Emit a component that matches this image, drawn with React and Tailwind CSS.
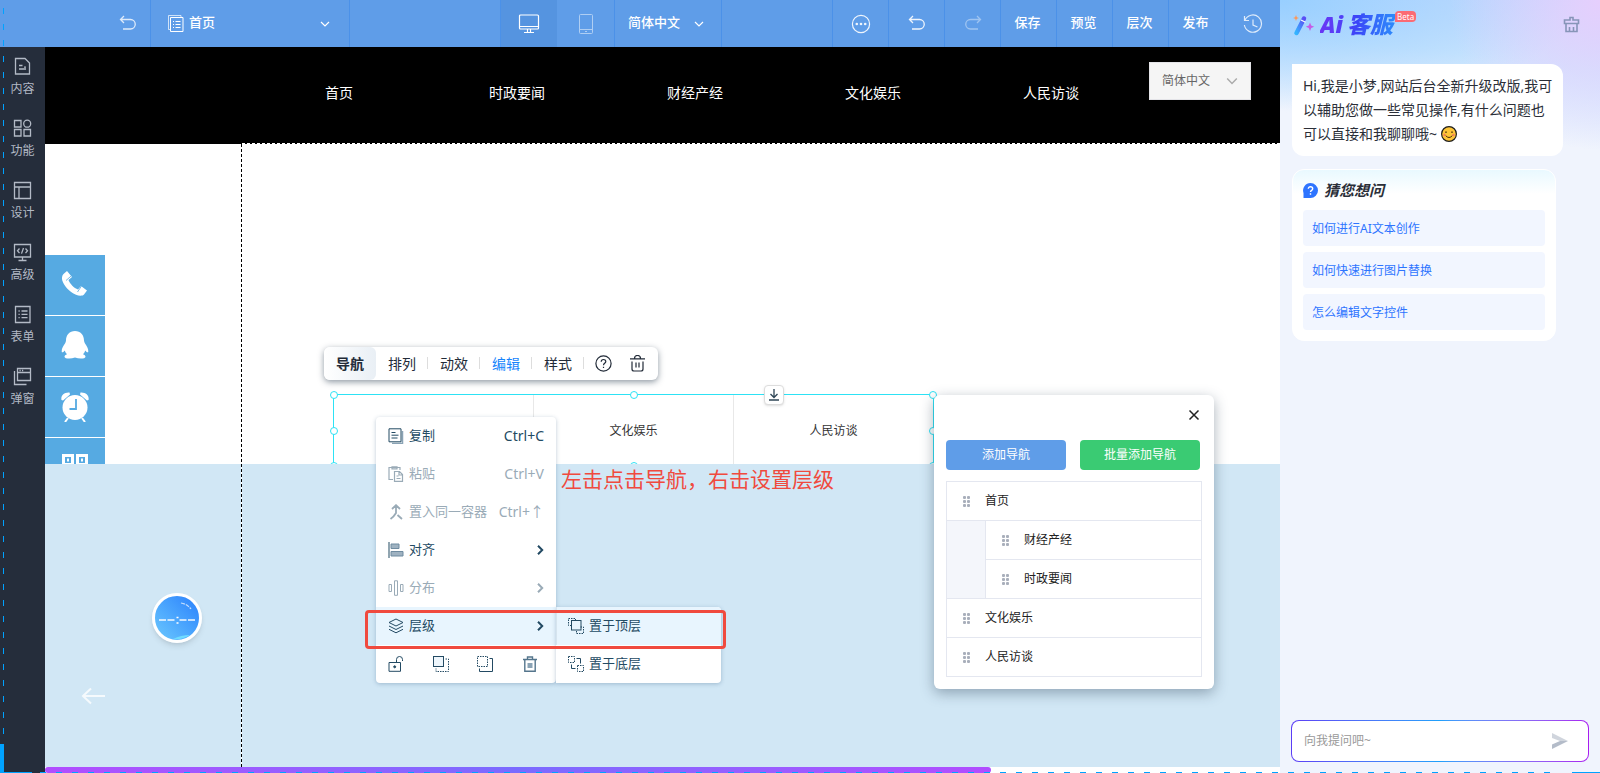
import React, { useState } from "react";

const navItems = ["首页", "时政要闻", "财经产经", "文化娱乐", "人民访谈"];

const Svg = ({ size = 16, box = 16, className = "", children, w = 1 }) => (
  <svg width={size} height={size} viewBox={`0 0 ${box} ${box}`} fill="none" stroke="currentColor" strokeWidth={w} className={`shrink-0 ${className}`} aria-hidden="true">
    {children}
  </svg>
);

const Chevron = ({ size = 10, className = "" }) => (
  <Svg size={size} box={10} w={1.2} className={className}>
    <path d="M1 3l4 4 4-4" />
  </Svg>
);

const UndoIcon = ({ className = "" }) => (
  <Svg size={18} box={18} w={1.3} className={className}>
    <path d="M5 1L1.500 4.500 5 8M1.500 4.500h10a4.600 4.600 0 010 9.500H4" />
  </Svg>
);

const sideItems = [
  {
    label: "内容",
    icon: <path d="M2.500 1.500h9.500l4.500 4.500v11h-14zM6 8.500h3.500M6 12h7M11 10.200h2" />,
  },
  {
    label: "功能",
    icon: (
      <>
        <path d="M1.500 1.500h6.500v6.500h-6.500zM1.500 10.500h6.500v6.500h-6.500zM11 10.500h6.500v6.500h-6.500z" />
        <circle cx="14.200" cy="4.700" r="3.500" />
      </>
    ),
  },
  { label: "设计", icon: <path d="M1.500 1.500h16v16h-16zM1.500 6h16M6 6v11.500" /> },
  { label: "高级", icon: <path d="M1.500 1.500h16v12.500h-16zM9.500 14v3.500M5.500 17.500h8M6.500 5.500L4.500 7.800l2 2.300M12.500 5.500l2 2.300-2 2.300M10.500 5l-2 5.600" /> },
  { label: "表单", icon: <path d="M2.500 1.500h14.500v16h-14.500zM5.500 6h1.200M5.500 9.300h1.200M5.500 12.600h1.200M8.500 6h6M8.500 9.300h6M8.500 12.600h6" /> },
  { label: "弹窗", icon: <path d="M4.500 1.500h13v12h-13zM4.500 5.500h13M6.500 3.500h1.200M9 3.500h1.200M1.500 4v13.500h12" /> },
];

const cell = "flex w-14 shrink-0 items-center justify-center border-l border-[#4b91e8]";

function TopBar() {
  return (
    <header className="flex h-[47px] shrink-0 bg-[#5f9de8] text-[13px] font-medium text-white">
      <button type="button" aria-label="返回" className="flex w-[150px] shrink-0 items-center justify-end pr-[13px]">
        <UndoIcon className="opacity-80" />
      </button>
      <div className="relative flex w-[200px] shrink-0 items-center border-x border-[#4b91e8]">
        <Svg size={18} box={18} className="pointer-events-none absolute left-4">
          <path d="M3 14.500H1.500V.5h12.500v2" opacity=".7" />
          <path d="M3.500 2.500h12.500v14h-12.500zM6 6.500h1M6 9.500h1M6 12.500h1M8.500 6.500h5M8.500 9.500h5M8.500 12.500h5" />
        </Svg>
        <select aria-label="页面" className="h-full w-full appearance-none bg-transparent pb-0.5 pl-[38px] outline-none">
          <option>首页</option>
        </select>
        <Chevron className="pointer-events-none absolute right-[19px]" />
      </div>
      <div className="w-[150px] shrink-0" />
      <button type="button" aria-label="电脑" className="flex w-[57px] shrink-0 items-center justify-center border-l border-[#4b91e8] bg-[#5594e0]">
        <Svg size={22} box={22} w={1.2}>
          <rect x="1.500" y="2" width="19" height="14" rx="1" />
          <path d="M1.500 13.500h19M9.500 16v3M12.500 16v3M6 19.500h10" />
        </Svg>
      </button>
      <button type="button" aria-label="手机" className="flex w-[57px] shrink-0 items-center justify-center">
        <Svg size={22} box={22} className="opacity-50">
          <rect x="4.500" y="1.500" width="13" height="19" rx="1" />
          <path d="M4.500 16.500h13M10 18.500h2" />
        </Svg>
      </button>
      <div className="relative flex w-[108px] shrink-0 items-center border-x border-[#4b91e8]">
        <select aria-label="语言" className="h-full w-full appearance-none bg-transparent pb-0.5 pl-[13px] outline-none">
          <option>简体中文</option>
        </select>
        <Chevron className="pointer-events-none absolute right-[17px]" />
      </div>
      <div className="flex-1" />
      <button type="button" aria-label="更多" className={cell}>
        <Svg size={20} box={20} w={1.2} className="opacity-90">
          <circle cx="10" cy="10" r="8.600" />
          <g fill="currentColor" stroke="none">
            <circle cx="5.800" cy="10" r="1.300" />
            <circle cx="10" cy="10" r="1.300" />
            <circle cx="14.200" cy="10" r="1.300" />
          </g>
        </Svg>
      </button>
      <button type="button" aria-label="撤销" className={cell}>
        <UndoIcon className="opacity-90" />
      </button>
      <button type="button" aria-label="重做" className={cell}>
        <UndoIcon className="-scale-x-100 opacity-40" />
      </button>
      {["保存", "预览", "层次", "发布"].map((label) => (
        <button key={label} type="button" className={`${cell} pr-0.5 pb-0.5`}>
          {label}
        </button>
      ))}
      <button type="button" aria-label="历史" className={cell}>
        <Svg size={20} box={20} w={1.2} className="opacity-80">
          <path d="M1.500 2v4.500h4.500M1.900 6.400A8.600 8.600 0 111.400 11M10 5.500v5.500l4.500 2" />
        </Svg>
      </button>
    </header>
  );
}

function SideBar() {
  return (
    <aside className="flex w-[45px] shrink-0 flex-col gap-4 bg-[#252d3b] pt-2.5 text-xs text-[#b3bac6]">
      {sideItems.map((item) => (
        <button key={item.label} type="button" className="flex h-[46px] flex-col items-center gap-[3px]">
          <Svg size={19} box={19} w={1.3}>
            {item.icon}
          </Svg>
          <span className="leading-5">{item.label}</span>
        </button>
      ))}
    </aside>
  );
}

function SiteHeader() {
  return (
    <div className="flex h-[97px] shrink-0 items-start bg-black bg-[repeating-linear-gradient(90deg,#fff_0_3px,#000_3px_5px)] bg-[length:calc(100%-197px)_1px] bg-right-bottom bg-no-repeat">
      <nav className="grid h-full flex-1 grid-cols-5 items-center pb-1.5 pl-[205px] text-center text-sm text-white">
        {navItems.map((item) => (
          <a key={item} href="#">
            {item}
          </a>
        ))}
      </nav>
      <div className="relative mt-[15px] mr-[29px] ml-[9px] flex h-[38px] w-[102px] items-center border border-[#e4e4e8] bg-[#f5f5f5] text-[#666]">
        <select aria-label="网站语言" className="h-full w-full appearance-none bg-transparent pl-3 text-xs outline-none">
          <option>简体中文</option>
        </select>
        <Chevron size={12} className="pointer-events-none absolute right-3 text-[#aaa]" />
      </div>
    </div>
  );
}

const socials = [
  {
    name: "电话",
    icon: (
      <>
        <path d="M2.500 4L6 1l5 6-3.500 3c1.500 4 5.500 8 9.500 9.500l3-3.500 6 4.500-3 4c-1 1.500-5 1.500-8 .3C8 21.500 3 16 1.300 10.500.6 8 1 5.500 2.500 4z" />
        <path d="M5 10.500l5.500-4.800M16.500 22l4-6" stroke="#56aae2" strokeWidth=".8" />
      </>
    ),
  },
  {
    name: "QQ",
    icon: <path d="M14 0C8.500 0 5 4 5 9.500c0 1-.5 2-1 3-1.500 2-3.500 5-3.300 8 .1 1.500 1.500 1 3-1 .4 1.500 1.200 2.800 2.300 3.800-1.500.5-2.500 1.300-2.500 2.400 0 2 6 2.600 10.500.8 4.500 1.800 10.500 1.200 10.500-.8 0-1.100-1-1.900-2.500-2.400 1.100-1 1.900-2.300 2.300-3.800 1.500 2 2.900 2.500 3 1 .2-3-1.800-6-3.300-8-.5-1-1-2-1-3C23 4 19.500 0 14 0z" />,
  },
  {
    name: "时间",
    icon: (
      <>
        <circle cx="14" cy="15.500" r="12.500" />
        <path d="M.5 8C-.5 4 3 0 8.500.5L9 2.500 2 8.500zM27.500 8C28.500 4 25 0 19.500.5L19 2.500l7 6z" />
        <path d="M7 26l-3 4M21 26l3 4" stroke="#fff" strokeWidth="2" />
        <path d="M15 7v10H8.500" stroke="#56aae2" strokeWidth="1.800" fill="none" />
      </>
    ),
  },
  {
    name: "二维码",
    icon: (
      <g fill="none" stroke="#fff" strokeWidth="3">
        <path d="M2.500 2.500h9v9h-9zM16.500 2.500h9v9h-9zM2.500 17.500h9v9h-9zM17 15v6h9v7" />
        <path d="M6 7h2M20 7h2" />
      </g>
    ),
  },
];

function Selection() {
  const dot = "absolute size-2 -translate-1/2 rounded-full border border-[#2de2f5] bg-white";
  return (
    <div className="absolute top-[250px] left-72 grid h-[73px] w-[601px] grid-cols-[199px_200px_200px] border border-[#2de2f5] text-xs text-[#333]">
      <a href="#" className="flex items-center justify-center" aria-label="首页"></a>
      <a href="#" className="flex items-center justify-center border-l border-[#e8e8e8]">
        文化娱乐
      </a>
      <a href="#" className="flex items-center justify-center border-l border-[#e8e8e8]">
        人民访谈
      </a>
      <i className={`${dot} top-0 left-0`} />
      <i className={`${dot} top-0 left-1/2`} />
      <i className={`${dot} top-0 left-full`} />
      <i className={`${dot} top-1/2 left-0`} />
      <i className={`${dot} top-1/2 left-full`} />
      <i className={`${dot} top-full left-0`} />
      <i className={`${dot} top-full left-1/2`} />
      <i className={`${dot} top-full left-full`} />
      <button type="button" aria-label="下移" className="absolute -top-2.5 left-[430px] flex size-5 items-center justify-center rounded-sm border border-[#ddd] bg-white text-[#2f4656] shadow-sm">
        <Svg size={12} box={12} w={1.3}>
          <path d="M6 0v8.500M2.500 5L6 8.500 9.500 5M1 11h10" />
        </Svg>
      </button>
    </div>
  );
}

function Toolbar() {
  const item = "relative flex w-[52px] items-center justify-center";
  const bar = <i className="absolute top-2.5 right-0 h-3 w-px bg-[#ddd]" />;
  return (
    <div className="absolute top-[300px] left-[279px] flex h-[33px] w-[334px] rounded-md bg-white text-sm text-[#222b38] shadow-[0_2px_6px_rgba(30,50,70,0.5)]">
      <button type="button" className="flex w-[52px] items-center justify-center rounded-md bg-linear-to-r from-white to-[#e9eff5] font-bold">
        导航
      </button>
      <button type="button" className={item}>排列{bar}</button>
      <button type="button" className={item}>动效{bar}</button>
      <button type="button" className={`${item} text-[#1684fc]`}>编辑{bar}</button>
      <button type="button" className={item}>样式{bar}</button>
      <button type="button" aria-label="帮助" className="ml-0.5 flex w-[34px] items-center justify-center">
        <Svg size={17} box={17} w={1.2}>
          <circle cx="8.500" cy="8.500" r="7.600" />
          <path d="M6.200 6.800c0-3 4.600-3 4.600-.2 0 1.800-2.300 1.700-2.300 3.600M8.500 11.700v1.300" />
        </Svg>
      </button>
      <button type="button" aria-label="删除" className="flex w-[34px] items-center justify-center">
        <Svg size={17} box={17} w={1.2}>
          <path d="M1 3.800h15M5.500 3.500a3 3 0 016 0M3 6.500v7.500q0 2 2 2h7q2 0 2-2V6.500M7 7.500v5M10 7.500v5" />
        </Svg>
      </button>
    </div>
  );
}

const menuItems = [
  {
    label: "复制",
    key: "Ctrl+C",
    icon: (
      <>
        <path d="M4 15.500h10.500V3" stroke="#8aa3b5" strokeWidth="1.500" />
        <path d="M1 .8h12v13H1zM3.500 4.500h4M3.500 7.200h7M3.500 10h6" />
      </>
    ),
  },
  { label: "粘贴", key: "Ctrl+V", disabled: true, icon: <path d="M5 13.500H1v-12h11v2.500M4 .8h5v2H4zM6.500 5.500h5l3 3v6.800h-8zM11 5.500v3.500h3.500M8.500 10h2M8.500 12.500h4" strokeWidth="1.200" /> },
  { label: "置入同一容器", key: "Ctrl+↑", disabled: true, icon: <path d="M8 1.500v7.500q-2 3.500-5.500 6M9.500 11l4.500 4M4 5l4-3.800L12 5" strokeWidth="1.800" /> },
  {
    label: "对齐",
    sub: true,
    icon: (
      <>
        <path d="M1 0v16" />
        <path d="M3 2h8v4.500H3zM3 9.500h12V14H3z" fill="#9fb2c1" stroke="#6f8ba0" />
      </>
    ),
  },
  { label: "分布", sub: true, disabled: true, icon: <path d="M1 4.500h2.500v7H1zM6.500.8h3v14.500h-3zM12.500 4.500H15v7h-2.500z" /> },
  { label: "层级", sub: true, active: true, icon: <path d="M8 1l7 3.500L8 8 1 4.500zM1 8l7 3.500L15 8M1 11.300l7 3.500 7-3.500" /> },
];

function ContextMenu() {
  return (
    <div className="absolute top-[370px] left-[331px] flex items-end text-[13px] text-[#234a63]">
      <div className="w-[180px] overflow-hidden rounded-sm bg-white shadow-[0_1px_4px_rgba(40,80,120,0.3)]">
        {menuItems.map((item) => (
          <button
            key={item.label}
            type="button"
            className={`flex h-[38px] w-full items-center pr-3 pl-3 ${item.disabled ? "text-[#9aabb7]" : ""} ${item.active ? "bg-[#e8f5fe]" : ""}`}
          >
            <Svg>{item.icon}</Svg>
            <span className="ml-[5px]">{item.label}</span>
            <span className="ml-auto text-sm">{item.key}</span>
            {item.sub && (
              <Svg size={10} box={10} w={2} className="-mr-px">
                <path d="M3 .8L7.200 5 3 9.200" />
              </Svg>
            )}
          </button>
        ))}
        <div className="flex h-[38px] items-center justify-between pr-[18px] pl-3">
          <button type="button" aria-label="锁定">
            <Svg>
              <path d="M1 6.500h11.500v8.800H1zM8.500 6V3.500a3 3 0 016 0V5" />
              <circle cx="6.700" cy="10.800" r="1" fill="currentColor" />
            </Svg>
          </button>
          <button type="button" aria-label="上移一层">
            <Svg>
              <rect x=".5" y=".5" width="10" height="10" fill="#eef6fc" />
              <path d="M12.500 3h3v12.500H3v-3" strokeDasharray="1.500 1" />
            </Svg>
          </button>
          <button type="button" aria-label="下移一层">
            <Svg>
              <path d="M.5.5h10v10H.5z" strokeDasharray="1.500 1" />
              <path d="M12.500 2.500h3v13H2.500v-3" />
            </Svg>
          </button>
          <button type="button" aria-label="删除图层">
            <Svg>
              <path d="M1 3.500h14M5.500 3V1h5v2M2.800 4v11.200h10.400V4" stroke="#54758c" strokeWidth="1.400" />
              <path d="M5.500 7h5v5h-5z" fill="#8aa3b5" stroke="none" />
            </Svg>
          </button>
        </div>
      </div>
      <div className="w-[165px] overflow-hidden rounded-r-sm bg-white shadow-[0_1px_4px_rgba(40,80,120,0.3)]">
        <button type="button" className="flex h-[38px] w-full items-center gap-[5px] border-l border-[#d6e4ee] bg-[#e8f5fe] pl-[11px]">
          <Svg>
            <path d="M3.500 7.500h-3v-7h7v2M12.500 9h3v6.500h-7v-3" strokeDasharray="1.500 1" />
            <rect x="3.500" y="2.500" width="9.500" height="9.500" />
          </Svg>
          置于顶层
        </button>
        <button type="button" className="flex h-[38px] w-full items-center gap-[5px] border-l border-transparent pl-[11px]">
          <Svg>
            <path d="M.5.5h6v6h-6zM9.500 9.500h6v6h-6z" strokeDasharray="1.500 1" />
            <path d="M8.500 2.500h4v5M3.500 8.500v4h4" />
          </Svg>
          置于底层
        </button>
      </div>
    </div>
  );
}

const Grip = () => (
  <svg width="7" height="11" viewBox="0 0 7 11" fill="#a9afbb" className="shrink-0" aria-hidden="true">
    {[0, 4, 8].map((y) => (
      <g key={y}>
        <rect x="0" y={y} width="3" height="3" rx="1" />
        <rect x="4" y={y} width="3" height="3" rx="1" />
      </g>
    ))}
  </svg>
);

const NavRow = ({ children }) => (
  <div className="flex h-[39px] items-center gap-[15px] border-b border-[#e4e7f0] pl-4">
    <Grip />
    {children}
  </div>
);

function NavPanel() {
  const [open, setOpen] = useState(true);
  if (!open) return null;
  return (
    <section className="absolute top-[348px] left-[889px] w-[280px] rounded-md bg-white px-3 pb-3 text-xs text-[#222] shadow-[0_4px_14px_rgba(40,60,80,0.4)]">
      <div className="flex h-[45px] items-start justify-end pt-3.5 pr-0.5">
        <button type="button" aria-label="关闭" onClick={() => setOpen(false)}>
          <Svg size={12} box={12} w={1.5}>
            <path d="M1.500 1.500l9 9M10.500 1.500l-9 9" />
          </Svg>
        </button>
      </div>
      <div className="flex gap-3.5 pr-0.5 text-white">
        <button type="button" className="h-[30px] flex-1 rounded-sm bg-[#5f9de8]">
          添加导航
        </button>
        <button type="button" className="h-[30px] flex-1 rounded-sm bg-[#3acb73]">
          批量添加导航
        </button>
      </div>
      <ul className="mt-[11px] border border-b-0 border-[#e4e7f0]">
        <li>
          <NavRow>首页</NavRow>
          <ul className="bg-[#f4f6fb] pl-[38px]">
            {["财经产经", "时政要闻"].map((item) => (
              <li key={item} className="border-l border-[#e4e7f0] bg-white">
                <NavRow>{item}</NavRow>
              </li>
            ))}
          </ul>
        </li>
        <li className="-mt-px border-t border-[#e4e7f0]">
          <NavRow>文化娱乐</NavRow>
        </li>
        <li>
          <NavRow>人民访谈</NavRow>
        </li>
      </ul>
    </section>
  );
}

function Canvas() {
  return (
    <main className="relative flex min-w-0 flex-1 flex-col overflow-hidden">
      <SiteHeader />
      <section className="relative h-80 shrink-0 overflow-hidden bg-white">
        <ul className="mt-[111px] flex w-[60px] flex-col gap-px">
          {socials.map((s) => (
            <li key={s.name}>
              <a href="#" aria-label={s.name} className="flex h-[60px] items-center justify-center bg-[#56aae2]">
                <svg width="28" height="30" viewBox="0 0 28 30" fill="#fff" aria-hidden="true">
                  {s.icon}
                </svg>
              </a>
            </li>
          ))}
        </ul>
        <Selection />
      </section>
      <section className="flex-1 bg-[#d1e7f5]" />
      <div className="h-1.5 shrink-0 bg-white">
        <div className="h-full w-[946px] rounded-full bg-linear-to-r from-[#b14dff] via-[#7a6bff] to-[#b14dff]" />
      </div>

      <i className="absolute top-[97px] bottom-1.5 left-[196px] w-px bg-[repeating-linear-gradient(180deg,#000_0_3px,#fff_3px_5px)]" />
      <div className="absolute top-[546px] left-[107px] flex size-[50px] items-center justify-center rounded-full border-[3px] border-white bg-linear-to-tr from-[#6cc8fd] to-[#2b7ffc] shadow-md">
        <svg width="44" height="44" viewBox="0 0 44 44" fill="none" stroke="#fff" aria-hidden="true">
          <path d="M4 24h7M12.500 24h7M24.500 24h7M33 24h7" strokeWidth="2" opacity=".7" />
          <path d="M21.500 21.500h2M21.500 27h2" strokeWidth="1.500" />
          <path d="M26 7q6 1 10 6" strokeWidth="1.200" strokeDasharray="4 1" opacity=".7" />
          <path d="M18 43q8-4 17-4-7 5-17 4z" fill="#6fdcff" stroke="none" />
        </svg>
      </div>
      <button type="button" aria-label="上一张" className="absolute top-[641px] left-9 text-white opacity-80">
        <Svg size={24} box={24} w={2}>
          <path d="M2 8h22M10 .5L2 8l8 7.500" />
        </Svg>
      </button>

      <Toolbar />
      <ContextMenu />
      <p className="absolute top-[416px] left-[516px] text-[21px] leading-8 whitespace-nowrap text-[#f04a3e]">左击点击导航，右击设置层级</p>
      <i className="pointer-events-none absolute top-[563px] left-80 h-[39px] w-[361px] rounded-sm border-3 border-[#f04a3e]" />
      <NavPanel />
    </main>
  );
}

const questions = ["如何进行AI文本创作", "如何快速进行图片替换", "怎么编辑文字控件"];

function Assistant() {
  return (
    <aside className="flex w-80 shrink-0 flex-col bg-[#f0f4fd] bg-[radial-gradient(circle_at_100%_0,#e6cffd_0,transparent_150px),radial-gradient(ellipse_300px_110px_at_0_0,#98cfff_0,transparent_100%),linear-gradient(187deg,#c3d8fe_0,#cde6fe_70px,#f0f4fd_150px)] pr-[11px] pb-[11px] pl-3 text-[#2b2f38]">
      <header className="flex h-16 items-start pt-2">
        <svg width="24" height="24" viewBox="0 0 24 24" className="mt-1.5 shrink-0" aria-hidden="true">
          <defs>
            <linearGradient id="wand" x1="0" y1="1" x2="1" y2="0">
              <stop offset="0" stopColor="#35b4ff" />
              <stop offset="1" stopColor="#5a4df5" />
            </linearGradient>
          </defs>
          <path d="M4.500 19L12 4.500" stroke="url(#wand)" strokeWidth="4.500" strokeLinecap="round" />
          <path d="M9 6l4.500 2.200" stroke="#fff" strokeWidth="1.200" />
          <path d="M4 1l.8 2.200L7 4l-2.200.8L4 7l-.8-2.200L1 4l2.200-.8z" fill="#ff9552" />
          <path d="M18 8.500l1.200 3 3 1.200-3 1.200-1.200 3-1.200-3-3-1.200 3-1.200z" fill="#c65be8" />
        </svg>
        <h1 className="ml-1 flex gap-1 bg-linear-to-r from-[#6a35f5] via-[#3a45f8] to-[#2d8bfb] bg-clip-text pr-0.5 text-[23px] leading-8 font-black text-transparent italic">
          <span>Ai</span>
          <span>客服</span>
        </h1>
        <span className="mt-[3px] rounded-sm rounded-bl-none bg-[#fb6b74] px-0.5 text-[8px] leading-[11px] text-white">Beta</span>
        <button type="button" aria-label="清空" className="mt-2 mr-[9px] ml-auto text-[#8795b8]">
          <Svg size={17} box={17} w={1.6}>
            <path d="M7 4V1.500h3V4h5.500v3.500h-14V4zM3 7.500v8h11v-8M6.500 15v-4M10.500 15v-4" />
          </Svg>
        </button>
      </header>
      <p className="mr-[26px] rounded-xl rounded-tl-none bg-white py-2.5 pr-2 pl-[11px] text-sm leading-6">
        Hi,我是小梦,网站后台全新升级改版,我可以辅助您做一些常见操作,有什么问题也可以直接和我聊聊哦~
        <svg width="16" height="16" viewBox="0 0 16 16" className="ml-1 inline align-[-3px]" role="img" aria-label="微笑">
          <circle cx="8" cy="8" r="7.400" fill="#fdc536" stroke="#1d1d1d" strokeWidth="1.200" />
          <path d="M4 6.500q1-1.500 2 0M10 6.500q1-1.500 2 0M4.500 9.500q3.500 4 7 0" fill="none" stroke="#4a2b0b" />
          <circle cx="3.500" cy="9" r="1.200" fill="#f5805a" />
          <circle cx="12.500" cy="9" r="1.200" fill="#f5805a" />
        </svg>
      </p>
      <section className="mt-[13px] mr-[33px] rounded-xl border border-white bg-white bg-linear-to-b from-[#e9f9ff] to-white to-[24px] px-2.5 pt-2 pb-2.5">
        <h2 className="flex h-6 items-center gap-1.5 text-[15px] font-bold italic">
          <svg width="15" height="15" viewBox="0 0 15 15" aria-hidden="true">
            <path d="M7.500 0a7.500 7.500 0 110 15H.5v-5A7.500 7.500 0 017.500 0z" fill="#2d74ff" />
            <path d="M5.300 5.800c0-2.900 4.400-2.700 4.400 0 0 1.600-2.200 1.500-2.200 3.200M7.500 10.300v1.500" fill="none" stroke="#fff" strokeWidth="1.400" />
          </svg>
          猜您想问
        </h2>
        <div className="mt-2 flex flex-col gap-1.5">
          {questions.map((q) => (
            <button key={q} type="button" className="h-9 rounded-sm bg-[#f2f6ff] px-[9px] pt-0.5 text-left text-xs text-[#2d74ff]">
              {q}
            </button>
          ))}
        </div>
      </section>
      <form className="mt-auto -ml-px rounded-lg bg-linear-to-r from-[#5b3df5] via-[#1ca0fb] to-[#a81cf0] p-px">
        <div className="flex h-10 items-center rounded-[7px] bg-white pr-5 pl-3">
          <input aria-label="提问" placeholder="向我提问吧~" className="min-w-0 flex-1 text-xs outline-none placeholder:text-[#999]" />
          <button type="button" aria-label="发送">
            <svg width="16" height="16" viewBox="0 0 16 16" aria-hidden="true">
              <path d="M0 0l16 8H8L0 5z" fill="#d0d5dd" />
              <path d="M0 16l16-8H8l-8 3.500z" fill="#b4bcc9" />
            </svg>
          </button>
        </div>
      </form>
    </aside>
  );
}

export default function App() {
  return (
    <div className="relative flex h-screen min-h-[700px] overflow-hidden bg-white font-['Noto_Sans','Noto_Sans_CJK_SC',sans-serif]">
      <div className="flex min-w-0 flex-1 flex-col">
        <TopBar />
        <div className="flex min-h-0 flex-1">
          <SideBar />
          <Canvas />
        </div>
      </div>
      <Assistant />

      <i className="pointer-events-none absolute top-2 bottom-8 left-[3px] w-px bg-[repeating-linear-gradient(180deg,#00a2ff_0_6px,transparent_6px_16px)]" />
      <i className="pointer-events-none absolute inset-x-10 bottom-0 h-px bg-[repeating-linear-gradient(90deg,#00a2ff_0_6px,transparent_6px_16px)]" />
      <i className="pointer-events-none absolute bottom-0 left-0 h-[29px] w-8 border-b border-l-4 border-[#00a2ff]" />
      <i className="pointer-events-none absolute right-0 bottom-0 h-px w-7 bg-[#00a2ff]" />
    </div>
  );
}
